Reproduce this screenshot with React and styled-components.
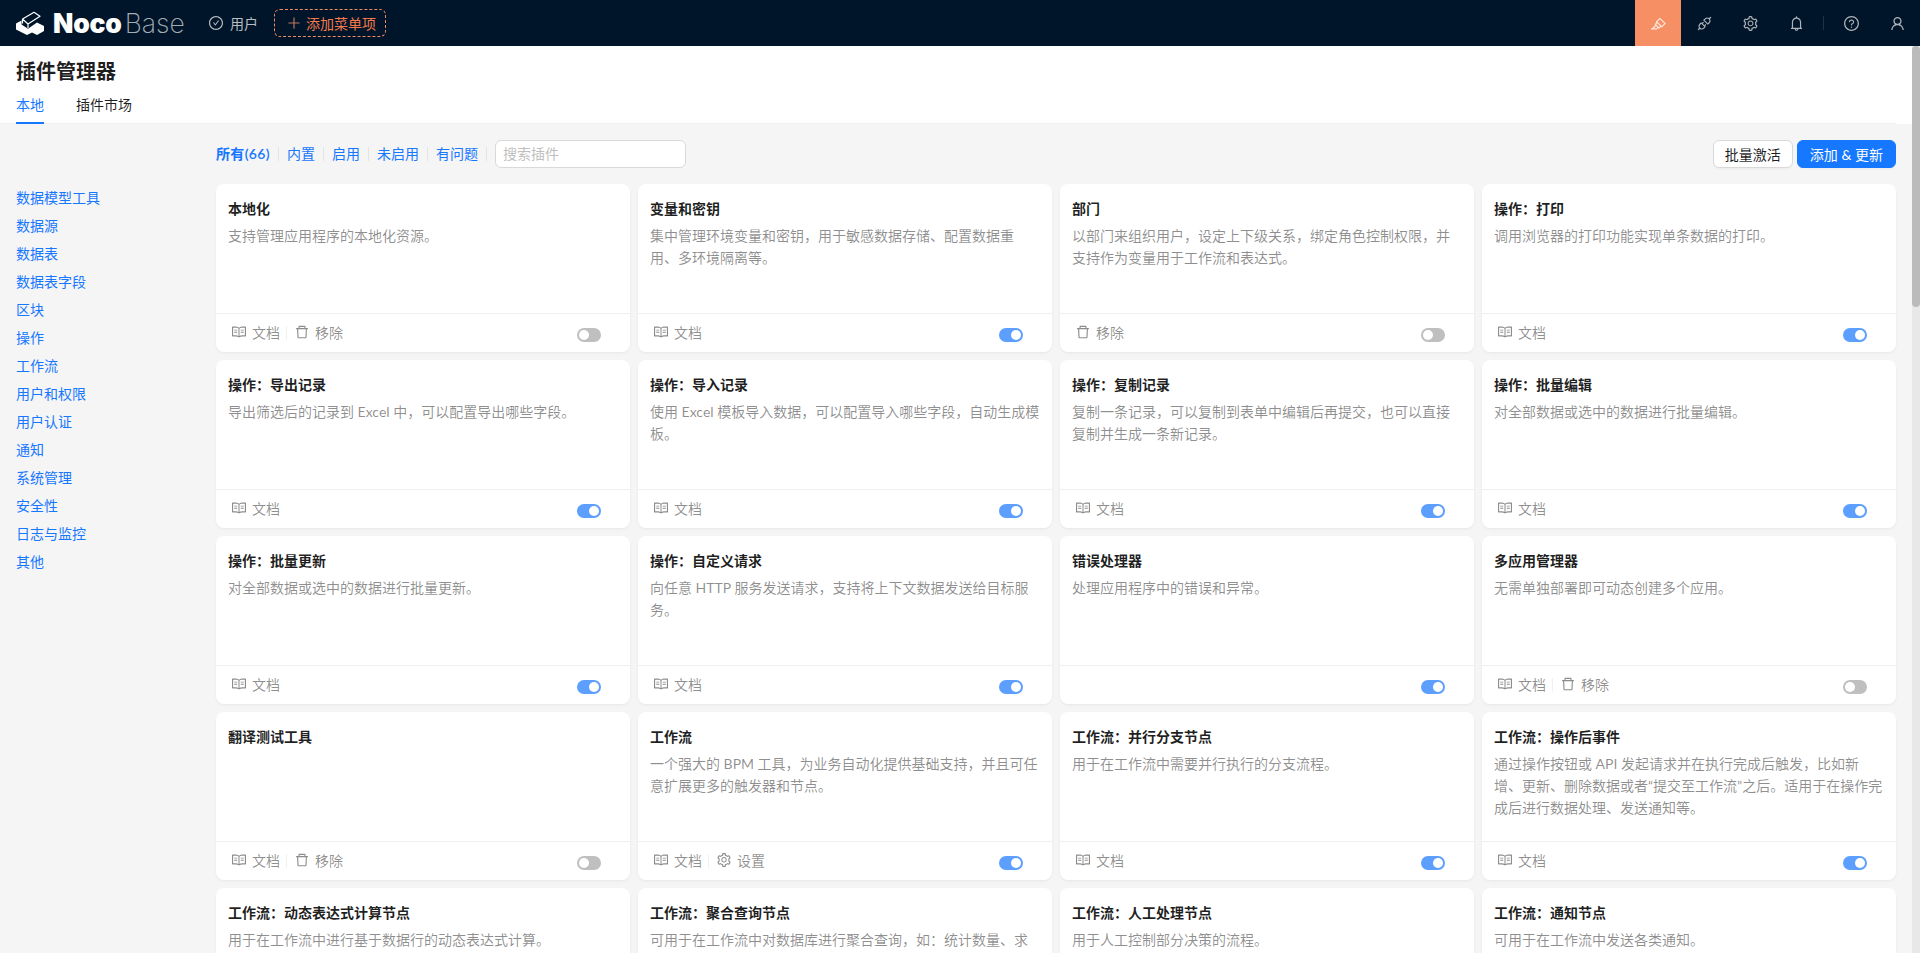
import styled, { createGlobalStyle } from 'styled-components';
import {
  AiOutlineApi,
  AiOutlineBell,
  AiOutlineCheckCircle,
  AiOutlineDelete,
  AiOutlineHighlight,
  AiOutlinePlus,
  AiOutlineQuestionCircle,
  AiOutlineRead,
  AiOutlineSetting,
  AiOutlineUser,
} from 'react-icons/ai';

const GlobalStyle = createGlobalStyle`
  html, body {
    margin: 0;
    height: 100%;
    overflow: hidden;
  }
  body {
    font-family: Lato, "Noto Sans CJK SC", sans-serif;
    font-size: 14px;
    color: rgba(0, 0, 0, 0.88);
  }
`;

const Page = styled.div`
  display: flex;
  flex-direction: column;
  height: 100vh;
`;

const TopBar = styled.header`
  display: flex;
  align-items: stretch;
  flex: none;
  height: 46px;
  background: #001529;
`;

const Brand = styled.div`
  display: flex;
  align-items: center;
  width: 208px;
  padding-left: 16px;
  box-sizing: border-box;
`;

const BrandBold = styled.span`
  margin-left: 8px;
  font-family: Inter, sans-serif;
  font-size: 26.5px;
  font-weight: 900;
  letter-spacing: -0.2px;
  color: #fff;
`;

const BrandThin = styled.span`
  margin-left: 3px;
  font-family: Inter, sans-serif;
  font-size: 26.5px;
  font-weight: 200;
  color: #a3adb6;
`;

const NavItem = styled.div`
  display: flex;
  align-items: center;
  gap: 6px;
  color: rgba(255, 255, 255, 0.72);
  font-size: 14px;
  svg {
    font-size: 16px;
  }
`;

const AddMenu = styled.div`
  display: flex;
  align-items: center;
  align-self: center;
  gap: 4px;
  width: 112px;
  height: 28px;
  margin-left: 16px;
  padding-left: 11px;
  box-sizing: border-box;
  border: 1px dashed #f18b62;
  border-radius: 6px;
  color: #f5794a;
  svg {
    font-size: 16px;
    color: #b9785b;
  }
`;

const TopRight = styled.div`
  display: flex;
  align-items: stretch;
  margin-left: auto;
`;

const TopIcon = styled.div`
  display: flex;
  align-items: center;
  justify-content: center;
  width: 46px;
  font-size: 17px;
  color: ${(p) => (p.$active ? 'rgba(255, 255, 255, 0.8)' : 'rgba(255, 255, 255, 0.68)')};
  background: ${(p) => (p.$active ? '#f68f63' : 'transparent')};
`;

const TopSep = styled.div`
  align-self: center;
  width: 1px;
  height: 14px;
  margin: 0 4px;
  background: rgba(255, 255, 255, 0.12);
`;

const Viewport = styled.div`
  display: flex;
  flex: 1;
  min-height: 0;
`;

const Scroller = styled.div`
  flex: 1;
  min-width: 0;
  overflow: hidden;
  background: #f5f5f5;
`;

const ScrollTrack = styled.div`
  flex: none;
  width: 8px;
  background: #e8e8e8;
`;

const ScrollThumb = styled.div`
  height: 261px;
  border-radius: 4px;
  background: #bbbbbb;
`;

const PageHead = styled.div`
  padding: 11px 0 0 16px;
  background: #fff;
`;

const Title = styled.h1`
  margin: 0 0 9px;
  font-size: 20px;
  line-height: 28px;
  font-weight: 600;
`;

const Tabs = styled.div`
  display: flex;
  gap: 32px;
`;

const Tab = styled.div`
  position: relative;
  padding-bottom: 8px;
  line-height: 22px;
  color: ${(p) => (p.$active ? '#1677ff' : 'rgba(0, 0, 0, 0.88)')};
  &::after {
    content: '';
    display: ${(p) => (p.$active ? 'block' : 'none')};
    position: absolute;
    left: 0;
    right: 0;
    bottom: 0;
    height: 2px;
    background: #1677ff;
  }
`;

const HeadLine = styled.div`
  height: 1px;
  margin: -1px 16px 0 0;
  background: #f0f0f0;
`;

const Main = styled.div`
  display: flex;
  padding-bottom: 22px;
`;

const Sidebar = styled.nav`
  flex: none;
  width: 216px;
  padding: 60px 0 0 16px;
  box-sizing: border-box;
`;

const SideLink = styled.div`
  line-height: 28px;
  color: #1677ff;
`;

const Content = styled.div`
  flex: 1;
  min-width: 0;
  padding: 16px 16px 0 0;
`;

const Toolbar = styled.div`
  display: flex;
  align-items: center;
  gap: 8px;
  height: 28px;
  margin-bottom: 16px;
`;

const FilterGroup = styled.span`
  display: flex;
  align-items: center;
  gap: 8px;
`;

const Filter = styled.span`
  padding-bottom: 2px;
  color: #1677ff;
  font-weight: ${(p) => (p.$active ? 600 : 400)};
  letter-spacing: ${(p) => (p.$active ? '0.35px' : '0')};
`;

const FilterSep = styled.span`
  width: 1px;
  height: 14px;
  background: #e4e4e4;
`;

const Search = styled.input`
  width: 191px;
  height: 28px;
  padding: 0 7px 2px;
  box-sizing: border-box;
  border: 1px solid #d9d9d9;
  border-radius: 6px;
  background: #fff;
  font: inherit;
  &::placeholder {
    color: #bfbfbf;
  }
`;

const ToolButtons = styled.div`
  display: flex;
  gap: 4px;
  margin-left: auto;
`;

const Button = styled.button`
  height: 28px;
  padding: 0 ${(p) => (p.$primary ? '12px' : '11px')} 1px;
  box-sizing: border-box;
  border: 1px solid ${(p) => (p.$primary ? '#1677ff' : '#d9d9d9')};
  border-radius: 6px;
  background: ${(p) => (p.$primary ? '#1677ff' : '#fff')};
  color: ${(p) => (p.$primary ? '#fff' : 'rgba(0, 0, 0, 0.88)')};
  font: inherit;
  box-shadow: 0 2px 0 rgba(0, 0, 0, 0.02);
`;

const Grid = styled.div`
  display: grid;
  grid-template-columns: repeat(4, 414px);
  grid-auto-rows: 168px;
  gap: 8px;
  align-content: start;
`;

const Card = styled.article`
  display: flex;
  flex-direction: column;
  background: #fff;
  border-radius: 8px;
  box-shadow: 0 1px 2px 0 rgba(0, 0, 0, 0.03), 0 1px 6px -1px rgba(0, 0, 0, 0.02),
    0 2px 4px 0 rgba(0, 0, 0, 0.02);
`;

const CardBody = styled.div`
  flex: none;
  height: 129px;
  padding: 14px 12px 0;
  box-sizing: border-box;
`;

const CardTitle = styled.div`
  margin-bottom: 5px;
  line-height: 22px;
  font-weight: 600;
`;

const CardDesc = styled.div`
  line-height: 22px;
  color: rgba(0, 0, 0, 0.45);
`;

const CardFooter = styled.div`
  display: flex;
  align-items: center;
  justify-content: space-between;
  flex: 1;
  padding: 0 29px 0 15px;
  border-top: 1px solid #f0f0f0;
`;

const Actions = styled.div`
  display: flex;
  align-items: center;
`;

const Action = styled.span`
  display: flex;
  align-items: center;
  gap: 5px;
  padding-bottom: 2px;
  color: rgba(0, 0, 0, 0.45);
  svg {
    font-size: 16px;
  }
`;

const ActionSep = styled.span`
  width: 1px;
  height: 14px;
  margin: 0 7px 0 6px;
  background: #f0f0f0;
`;

const Toggle = styled.span`
  display: flex;
  justify-content: ${(p) => (p.$on ? 'flex-end' : 'flex-start')};
  align-items: center;
  width: 24px;
  height: 14px;
  margin-top: 4px;
  padding: 2px;
  box-sizing: border-box;
  border-radius: 7px;
  background: ${(p) => (p.$on ? '#5c9fff' : '#bfbfbf')};
  &::after {
    content: '';
    width: 10px;
    height: 10px;
    border-radius: 50%;
    background: #fff;
  }
`;

const sideLinks = [
  '数据模型工具', '数据源', '数据表', '数据表字段', '区块', '操作', '工作流',
  '用户和权限', '用户认证', '通知', '系统管理', '安全性', '日志与监控', '其他',
];

const filters = ['所有(66)', '内置', '启用', '未启用', '有问题'];

const plugins = [
  { title: '本地化', desc: '支持管理应用程序的本地化资源。', actions: ['doc', 'remove'], on: false },
  { title: '变量和密钥', desc: '集中管理环境变量和密钥，用于敏感数据存储、配置数据重用、多环境隔离等。', actions: ['doc'], on: true },
  { title: '部门', desc: '以部门来组织用户，设定上下级关系，绑定角色控制权限，并支持作为变量用于工作流和表达式。', actions: ['remove'], on: false },
  { title: '操作：打印', desc: '调用浏览器的打印功能实现单条数据的打印。', actions: ['doc'], on: true },
  { title: '操作：导出记录', desc: '导出筛选后的记录到 Excel 中，可以配置导出哪些字段。', actions: ['doc'], on: true },
  { title: '操作：导入记录', desc: '使用 Excel 模板导入数据，可以配置导入哪些字段，自动生成模板。', actions: ['doc'], on: true },
  { title: '操作：复制记录', desc: '复制一条记录，可以复制到表单中编辑后再提交，也可以直接复制并生成一条新记录。', actions: ['doc'], on: true },
  { title: '操作：批量编辑', desc: '对全部数据或选中的数据进行批量编辑。', actions: ['doc'], on: true },
  { title: '操作：批量更新', desc: '对全部数据或选中的数据进行批量更新。', actions: ['doc'], on: true },
  { title: '操作：自定义请求', desc: '向任意 HTTP 服务发送请求，支持将上下文数据发送给目标服务。', actions: ['doc'], on: true },
  { title: '错误处理器', desc: '处理应用程序中的错误和异常。', actions: [], on: true },
  { title: '多应用管理器', desc: '无需单独部署即可动态创建多个应用。', actions: ['doc', 'remove'], on: false },
  { title: '翻译测试工具', desc: '', actions: ['doc', 'remove'], on: false },
  { title: '工作流', desc: '一个强大的 BPM 工具，为业务自动化提供基础支持，并且可任意扩展更多的触发器和节点。', actions: ['doc', 'settings'], on: true },
  { title: '工作流：并行分支节点', desc: '用于在工作流中需要并行执行的分支流程。', actions: ['doc'], on: true },
  { title: '工作流：操作后事件', desc: '通过操作按钮或 API 发起请求并在执行完成后触发，比如新增、更新、删除数据或者“提交至工作流”之后。适用于在操作完成后进行数据处理、发送通知等。', actions: ['doc'], on: true },
  { title: '工作流：动态表达式计算节点', desc: '用于在工作流中进行基于数据行的动态表达式计算。', actions: ['doc'], on: true },
  { title: '工作流：聚合查询节点', desc: '可用于在工作流中对数据库进行聚合查询，如：统计数量、求和、平均值等。', actions: ['doc'], on: true },
  { title: '工作流：人工处理节点', desc: '用于人工控制部分决策的流程。', actions: ['doc'], on: true },
  { title: '工作流：通知节点', desc: '可用于在工作流中发送各类通知。', actions: ['doc'], on: true },
];

const actionKinds = {
  doc: { icon: <AiOutlineRead />, label: '文档' },
  remove: { icon: <AiOutlineDelete />, label: '移除' },
  settings: { icon: <AiOutlineSetting />, label: '设置' },
};

function LogoMark() {
  return (
    <svg width="29" height="24" viewBox="0 0 29 24" fill="none">
      <path
        d="M6.5 8 L18 1.3 L24 5.3 L12 13 Z M6.5 8 V12.5 M12 13 V17"
        stroke="#fff"
        strokeWidth="1.2"
        strokeLinejoin="round"
      />
      <path
        d="M0 12.5 L5.5 9.5 V13.5 L12 17.8 L21 11.5 L28 15 V20 L21 24 L16 21.5 L11 24 L0 18.5 Z"
        fill="#fff"
      />
    </svg>
  );
}

function PluginCard({ plugin }) {
  return (
    <Card>
      <CardBody>
        <CardTitle>{plugin.title}</CardTitle>
        <CardDesc>{plugin.desc}</CardDesc>
      </CardBody>
      <CardFooter>
        <Actions>
          {plugin.actions.map((kind, i) => (
            <Actions key={kind}>
              {i > 0 && <ActionSep />}
              <Action>
                {actionKinds[kind].icon}
                {actionKinds[kind].label}
              </Action>
            </Actions>
          ))}
        </Actions>
        <Toggle $on={plugin.on} />
      </CardFooter>
    </Card>
  );
}

export default function App() {
  return (
    <Page>
      <GlobalStyle />
      <TopBar>
        <Brand>
          <LogoMark />
          <BrandBold>Noco</BrandBold>
          <BrandThin>Base</BrandThin>
        </Brand>
        <NavItem>
          <AiOutlineCheckCircle />
          用户
        </NavItem>
        <AddMenu>
          <AiOutlinePlus />
          添加菜单项
        </AddMenu>
        <TopRight>
          <TopIcon $active><AiOutlineHighlight /></TopIcon>
          <TopIcon><AiOutlineApi /></TopIcon>
          <TopIcon><AiOutlineSetting /></TopIcon>
          <TopIcon><AiOutlineBell /></TopIcon>
          <TopSep />
          <TopIcon><AiOutlineQuestionCircle /></TopIcon>
          <TopIcon><AiOutlineUser /></TopIcon>
        </TopRight>
      </TopBar>
      <Viewport>
        <Scroller>
          <PageHead>
            <Title>插件管理器</Title>
            <Tabs>
              <Tab $active>本地</Tab>
              <Tab>插件市场</Tab>
            </Tabs>
          </PageHead>
          <HeadLine />
          <Main>
            <Sidebar>
              {sideLinks.map((link) => (
                <SideLink key={link}>{link}</SideLink>
              ))}
            </Sidebar>
            <Content>
              <Toolbar>
                {filters.map((f, i) => (
                  <FilterGroup key={f}>
                    <Filter $active={i === 0}>{f}</Filter>
                    <FilterSep />
                  </FilterGroup>
                ))}
                <Search placeholder="搜索插件" />
                <ToolButtons>
                  <Button>批量激活</Button>
                  <Button $primary>添加 &amp; 更新</Button>
                </ToolButtons>
              </Toolbar>
              <Grid>
                {plugins.map((plugin) => (
                  <PluginCard key={plugin.title} plugin={plugin} />
                ))}
              </Grid>
            </Content>
          </Main>
        </Scroller>
        <ScrollTrack>
          <ScrollThumb />
        </ScrollTrack>
      </Viewport>
    </Page>
  );
}
